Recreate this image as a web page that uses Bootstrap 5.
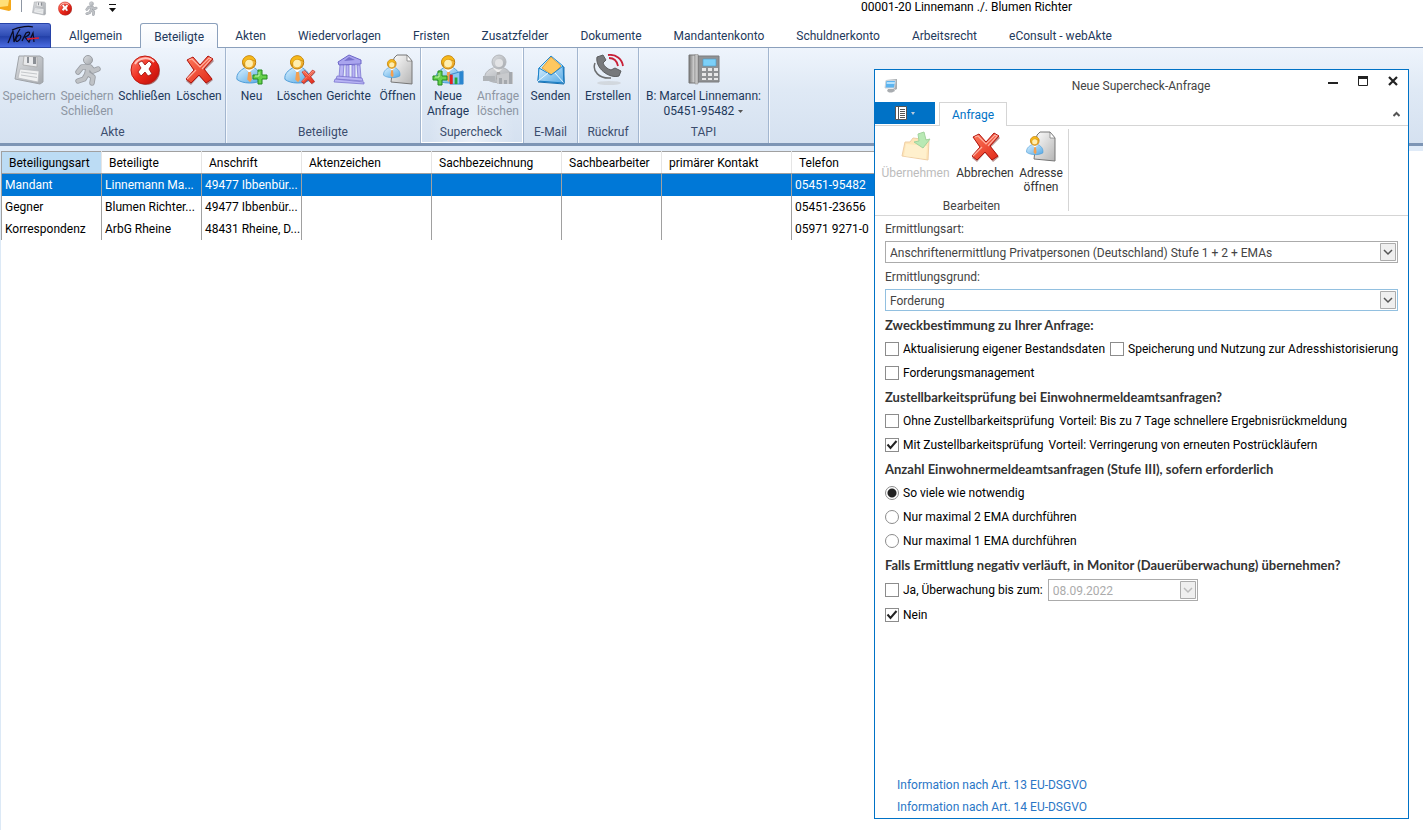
<!DOCTYPE html>
<html lang="de">
<head>
<meta charset="utf-8">
<meta name="viewport" content="width=device-width, initial-scale=1">
<title>00001-20 Linnemann ./. Blumen Richter</title>
<link href="https://cdn.jsdelivr.net/npm/bootstrap@5.3.0/dist/css/bootstrap.min.css" rel="stylesheet">
<style>
  body { font: 12px/16px Roboto, "Open Sans", sans-serif; color: #000; background: #fff; }
  button { font: inherit; color: inherit; background: none; border: 0; padding: 0; }
  svg { display: block; flex: none; }

  /* Main window */
  .titlebar { height: 24px; }
  .quick { gap: 10px; height: 17px; }
  .quick-orange { margin-right: -1px; }
  .quick-line { width: 1px; height: 12px; margin-right: -1px; background: #8d96a3; }
  .window-title { margin-left: 393px; line-height: 15px; }
  .main-tabs { height: 25px; margin-top: -1px; border-bottom: 1px solid #8ba0bc; }
  .app-btn { width: 51px; height: 25px; margin-right: 2px; border: 1px solid #2743a8; border-left: 0; border-radius: 0 3px 0 0;
    background: linear-gradient(#5a75d8, #2f4db4 50%, #2340a8 55%, #4a6be0); }
  .main-tabs .nav-link { padding: 0 16px; line-height: 27px; color: #1e395b; white-space: nowrap; }
  .main-tabs .nav-link.active { height: 26px; margin: 0 1px 0 2px; padding: 0 13px; background: linear-gradient(#fff, #f0f5fc);
    border: 1px solid #8ba0bc; border-bottom: 0; border-radius: 3px 3px 0 0; line-height: 26px; }
  .ribbon { height: 95px; background: linear-gradient(#eef4fc, #dfe9f5 45%, #d5e1f0); color: #1e395b; }
  .grp { display: grid; grid-template-rows: 76px 17px; border-right: 1px solid #a3b6cf; box-shadow: 1px 0 #f4f8fd; text-align: center; padding-top: 1px; }
  .grp-akte { grid-template-columns: 58px 58px 57px 52px; }
  .grp-bet { grid-template-columns: 51px 45px 53px 45px; }
  .grp-super { grid-template-columns: 54px 46px; padding-right: 2px; background: radial-gradient(ellipse at 50% 100%, #fff8, #fff0 60%); box-shadow: inset -1px -1px #fff, inset 1px 0 #fff; }
  .grp-mail { grid-template-columns: 53px; }
  .grp-call { grid-template-columns: 60px; }
  .grp-tapi { grid-template-columns: 129px; }
  .grp-name { grid-column: 1 / -1; color: #3b4d6e; line-height: 14px; }
  .tool { display: flex; flex-direction: column; align-items: center; line-height: 15px; padding-top: 5px; white-space: nowrap; }
  .tool svg { margin-bottom: 3px; }
  .tool:disabled { color: #8d96a3; }
  .tool .menu-caret { margin-bottom: 0; }
  .ribbon-edge { height: 8px; border-top: 3px solid #7d95b5; background: #e0ebf8; }
  .client { border-left: 1px solid #dce9f6; }

  /* Table of parties */
  .parties { width: 884px; table-layout: fixed; border-top: 1px solid #a0a0a0; border-left: 1px solid #a0a0a0; }
  .parties th { font-weight: 400; height: 22px; padding: 0 7px; border-bottom: 1px solid #a0a0a0; border-right: 1px solid #e5e5e5; white-space: nowrap; }
  .parties th:first-child { background: #bcdcf4; }
  .parties td { height: 22px; padding: 0 0 0 3px; border-right: 1px solid #a0a0a0; white-space: nowrap; }
  .parties .picked { background: #0078d7; color: #fff; }

  /* Floating dialog window */
  .dlg { position: absolute; top: 69px; right: 14px; bottom: 11px; width: 535px; background: #fff; border: 1px solid #0072c6; color: #444; }
  .dlg-title { height: 32px; padding-left: 8px; }
  .dlg-title h1 { font-size: 12px; font-weight: 400; line-height: 16px; margin: 0; }
  .win-btns { gap: 18px; padding: 5px 9px 0 0; margin-left: -56px; }
  .dlg-tabs { height: 24px; border-bottom: 1px solid #d5d5d5; }
  .file-btn { width: 60px; height: 22px; background: #0072c6; }
  .dlg-tabs .nav-link { width: 68px; height: 24px; margin-left: 4px; padding: 0; border: 1px solid #d5d5d5; border-bottom: 0; background: #fff;
    color: #0072c6; text-align: center; line-height: 24px; }
  .dlg-ribbon { height: 90px; padding: 3px 0 4px; border-bottom: 1px solid #d5d5d5; }
  .dlg-grp { display: grid; grid-template-columns: 81px 58px 54px; grid-template-rows: 70px 14px; border-right: 1px solid #d5d5d5; text-align: center; color: #333; }
  .dlg-grp .grp-name { color: #444; }
  .dlg-grp .tool { line-height: 14px; padding-top: 2px; }
  .dlg-grp .tool:disabled { color: #bcbcbc; }
  .dlg-grp .tool:disabled svg { opacity: .5; }
  .dlg-form { padding: 1px 10px 0; }
  .line-row { min-height: 24px; display: flex; align-items: center; gap: 4px; color: #000; white-space: nowrap; }
  .line-row.with-date { min-height: 26px; }
  .line-row label { margin-right: 1px; }
  .field-label { display: block; line-height: 24px; }
  .topic { font: 700 13px/24px Lato, "Open Sans", sans-serif; color: #333; margin: 0; white-space: nowrap; }
  .pick { appearance: none; display: block; width: 100%; height: 22px; margin-bottom: 2px; padding: 1px 22px 0 4px; font: inherit; color: #444; border: 1px solid #ababab; border-radius: 0;
    background: #fff url("data:image/svg+xml,%3Csvg xmlns='http://www.w3.org/2000/svg' width='16' height='18'%3E%3Cpath d='M.5.5h15v17H.5z' fill='%23efefef' stroke='%23ababab'/%3E%3Cpath d='M4 7l4 4 4-4' fill='none' stroke='%23555' stroke-width='1.5'/%3E%3C/svg%3E") no-repeat right 1px center; }
  .pick.lit { border-color: #92c0e0; }
  .pick:disabled { width: 150px; color: #ababab; opacity: 1; margin: 0;
    background-image: url("data:image/svg+xml,%3Csvg xmlns='http://www.w3.org/2000/svg' width='16' height='18'%3E%3Cpath d='M.5.5h15v17H.5z' fill='%23efefef' stroke='%23ababab'/%3E%3Cpath d='M4 7l4 4 4-4' fill='none' stroke='%23bbb' stroke-width='1.5'/%3E%3C/svg%3E"); }
  .tick { appearance: none; flex: none; width: 14px; height: 14px; margin: 0; border: 1px solid #8c8c8c; background: #fff; }
  .tick[type=radio] { border-radius: 50%; }
  .tick[type=checkbox]:checked { background-image: url("data:image/svg+xml,%3Csvg xmlns='http://www.w3.org/2000/svg' width='12' height='12'%3E%3Cpath d='M1.5 5.5L4.5 9 10.5 2' fill='none' stroke='%23222' stroke-width='2'/%3E%3C/svg%3E"); }
  .tick[type=radio]:checked { background: radial-gradient(circle, #222 4px, #fff 5px); }
  .dlg-links { padding: 0 22px; line-height: 22px; }
  .dlg-links a { color: #2a76c6; text-decoration: none; }
</style>
</head>
<body class="vh-100 d-flex flex-column overflow-hidden position-relative">

<svg width="0" height="0" class="position-absolute" aria-hidden="true">
  <defs>
    <linearGradient id="gGold" x1="0" y1="0" x2="1" y2="1"><stop offset="0" stop-color="#ffe680"/><stop offset="1" stop-color="#e89a10"/></linearGradient>
    <linearGradient id="gBlue" x1="0" y1="0" x2="1" y2="1"><stop offset="0" stop-color="#d8f0ff"/><stop offset="1" stop-color="#55a8e4"/></linearGradient>
    <linearGradient id="gGrey" x1="0" y1="0" x2="1" y2="1"><stop offset="0" stop-color="#dcdee1"/><stop offset="1" stop-color="#a4a8ad"/></linearGradient>
    <linearGradient id="gRed" x1="0" y1="0" x2="1" y2="1"><stop offset="0" stop-color="#ff8a78"/><stop offset=".5" stop-color="#ee2a1c"/><stop offset="1" stop-color="#b80c08"/></linearGradient>
    <linearGradient id="gCross" x1="0" y1="0" x2="1" y2="1"><stop offset="0" stop-color="#ff7a5c"/><stop offset="1" stop-color="#e02818"/></linearGradient>
    <linearGradient id="gPage" x1="0" y1="0" x2="1" y2="1"><stop offset="0" stop-color="#fff"/><stop offset="1" stop-color="#b4b4b4"/></linearGradient>
    <linearGradient id="gPhone" x1="0" y1="0" x2="1" y2="0"><stop offset="0" stop-color="#777"/><stop offset=".5" stop-color="#c9c9c9"/><stop offset="1" stop-color="#6e6e6e"/></linearGradient>
    <symbol id="save" viewBox="0 0 32 32">
      <path d="M6 2h21l3 2v24l-3 2L2 25z" fill="url(#gGrey)" stroke="#9fa3a8"/>
      <path d="M11 2l-1 9 14 2V3z" fill="#e9eaec" stroke="#aaa" stroke-width=".8"/><path d="M20 3h3v7h-3zM14 3h2v6h-2z" fill="#8b8f95"/>
      <path d="M7 15l19 2-1 11L5 24z" fill="#f0f1f2" stroke="#b3b6ba" stroke-width=".7"/><path d="M8 18l16 2M8 21l16 2.500" stroke="#c4c7ca"/>
    </symbol>
    <symbol id="runner" viewBox="0 0 32 32">
      <g fill="none" stroke="#9a9ea4" stroke-width="5.500" stroke-linejoin="round" stroke-linecap="round"><path d="M17 13l-1 7-3 5-6 2M16 19l6 4-1 6M7 18l4-5 8 0 3 4 5-2"/></g>
      <g fill="none" stroke="#bfc2c6" stroke-width="3.800" stroke-linejoin="round" stroke-linecap="round"><path d="M17 13l-1 7-3 5-6 2M16 19l6 4-1 6M7 18l4-5 8 0 3 4 5-2"/></g>
      <circle cx="17" cy="6" r="4.500" fill="url(#gGrey)" stroke="#9a9ea4"/>
    </symbol>
    <symbol id="closeball" viewBox="0 0 32 32">
      <circle cx="17" cy="17" r="14" fill="#7d1a14" opacity=".6"/><circle cx="16" cy="16" r="14" fill="url(#gRed)" stroke="#c01810"/>
      <path d="M6 10a11 9 0 0 1 19-2" stroke="#ffc4bc" stroke-width="2" fill="none"/>
      <path d="M9 9l4-2 3 4 4-4 3 3-3 5 3 5-4 2-3-4-4 4-3-4 3-4z" fill="#fff" stroke="#9b100c" stroke-width=".8"/>
    </symbol>
    <symbol id="cross" viewBox="0 0 32 32">
      <path d="M5 7l6-2 7 7 9-9 4 4-9 9 8 10-6 5-8-9-8 9-5-4 8-10z" fill="#7b2a24" opacity=".5"/>
      <path d="M4 6l6-3 7 8 8-9 5 3-9 10 8 10-6 4-7-8-8 8-5-4 8-9z" fill="url(#gCross)" stroke="#b0140e"/>
      <path d="M6 6l3-1 8 8 9-9 2 1-9 10M4 25l9-9" stroke="#ffb0a0" stroke-width="1.200" fill="none"/>
    </symbol>
    <symbol id="person" viewBox="0 0 32 32">
      <path d="M1 26c-1-6 4-10 8-12h11c5 3 8 7 7 13-6 4-20 4-26-1z" fill="url(#gBlue)" stroke="#4a9ad6"/>
      <path d="M9 14l5 5 6-5-3-2h-5z" fill="#fff" stroke="#8ab8dc" stroke-width=".5"/><path d="M13 18h3l1 8-2 3-3-3z" fill="#f4a050"/>
      <circle cx="14" cy="8" r="7" fill="url(#gGold)" stroke="#b87808"/><path d="M7 8c0-9 13-10 14-1-3-2-9-3-11 0-1 1-1 3-1 5z" fill="#f5b81c" stroke="#b87808" stroke-width=".6"/><circle cx="14" cy="9" r="4" fill="#ffeeb0"/>
    </symbol>
    <symbol id="persongrey" viewBox="0 0 32 32">
      <path d="M3 24c-1-6 5-9 8-10h11c5 2 8 6 7 12-6 4-20 4-26-2z" fill="url(#gGrey)" stroke="#b0b3b7"/>
      <path d="M11 14l5 5 5-5z" fill="#eee"/><path d="M15 18h3l1 7-2 3-3-3z" fill="#aaa"/>
      <circle cx="17" cy="8" r="7" fill="url(#gGrey)" stroke="#b4b7bb"/><circle cx="17" cy="9" r="4" fill="#e2e3e5"/>
      <path d="M1 22h12v5H1z" fill="#b0b4b8"/><path d="M15 30V21l16-3v12z" fill="#c8cacd"/><path d="M17 30v-6h3v6zM22 30v-4h3v4zM27 30V18h3v12z" fill="#a4a8ad"/>
    </symbol>
    <symbol id="plus" viewBox="0 0 16 16"><path d="M6 1h4v5h5v4h-5v5H6v-5H1V6h5z" fill="#66d04c" stroke="#238a1c"/><path d="M7 3v4H3" stroke="#c6f5b4" fill="none"/></symbol>
    <symbol id="court" viewBox="0 0 32 32">
      <path d="M5 8L16 1l12 5v4L6 11z" fill="#a9a4ee" stroke="#6c66c8"/><path d="M11 7l5-4 6 3z" fill="#7670cc"/>
      <g fill="#b8b4f4" stroke="#726ccc" stroke-width=".7"><path d="M7 11h4l-1 12H6zM13 11h3v13h-3zM19 11h3v13h-3zM24 11h3l1 13h-3z"/><path d="M4 22l25 2 1 3-27-2z"/><path d="M2 25l29 3v2L1 28z"/></g>
    </symbol>
    <symbol id="pageperson" viewBox="0 0 32 32">
      <path d="M12 4l3-3h10l5 6v23L9 28z" fill="url(#gPage)" stroke="#777"/><path d="M25 1v6h5z" fill="#fff" stroke="#777" stroke-width=".7"/>
      <use href="#person" x="1" y="5" width="20" height="20"/>
    </symbol>
    <symbol id="bars" viewBox="0 0 16 16"><path d="M1 15V5l14-4v14z" fill="#8cc8f0" stroke="#3a88c8"/><path d="M1 15V5h3v10z" fill="#e02020"/><path d="M6 15V8h3v7z" fill="#28a838"/><path d="M11 15V2h4v13z" fill="#2a86d0"/></symbol>
    <symbol id="mail" viewBox="0 0 32 32">
      <path d="M4 14L16 2l12 10 1 17-26-2z" fill="#c2ebff" stroke="#2288cc"/><path d="M7 14L16 3l10 9-9 9z" fill="#ffc860" stroke="#d8942c" stroke-width=".8"/>
      <path d="M4 14l12 7 12-9 1 17-26-2z" fill="url(#gBlue)" stroke="#1a80c8"/><path d="M3 27l10-8M29 29l-9-10" stroke="#eaf8ff"/><path d="M3 28l26 2V13" fill="none" stroke="#1a70b0"/>
    </symbol>
    <symbol id="dial" viewBox="0 0 32 32">
      <path d="M3 9C0 17 7 25 19 24" fill="none" stroke="#6c6e70" stroke-width="1.500"/>
      <path d="M5 3l6-2 3 5-3 3c1 3 4 6 8 7l4-2 6 3-2 5C17 25 3 14 5 3z" fill="#77797c" stroke="#5c5e60"/>
      <path d="M17 4c5 0 8 3 9 8M16 1c8-1 14 4 15 11" fill="none" stroke="#c82038" stroke-width="1.800"/><ellipse cx="17" cy="29" rx="12" ry="2" fill="#bbb" opacity=".4"/>
    </symbol>
    <symbol id="desk" viewBox="0 0 32 32">
      <path d="M10 2h21v26H10z" fill="#909294" stroke="#7a7c7e"/><path d="M1 1h9v28H1z" fill="url(#gPhone)" stroke="#777"/><path d="M7 0h3v30H7z" fill="#c4c4c4" stroke="#888" stroke-width=".5"/>
      <path d="M15 5h13v7H15z" fill="#7cd0f8" stroke="#4c9cc8" stroke-width=".6"/><g fill="#e8e8e8"><path d="M14 14h4v3h-4zM20 14h4v3h-4zM26 14h4v3h-4zM14 19h4v3h-4zM20 19h4v3h-4zM26 19h4v3h-4zM14 24h4v2h-4zM20 24h4v2h-4zM26 24h4v2h-4z"/></g>
    </symbol>
    <symbol id="accept" viewBox="0 0 32 32">
      <path d="M5 11l5 0 3-4 16 2-1 20-26-4z" fill="#ffcf74" stroke="#e0a050"/><path d="M6 13l21 2-1 13-22-3z" fill="#ffe39c"/><path d="M18 3l6-2 2 8 4-1-7 9-9-6 5-1z" fill="#74d46c" stroke="#46a83e"/>
    </symbol>
    <symbol id="monitor" viewBox="0 0 16 16"><path d="M3 2l11-1v10l-2 1z" fill="#a8acb0"/><path d="M3 2.500h9.500l-1 7.500H2z" fill="#5cb4f0" stroke="#cfd3d8"/><path d="M4 4h8l-.3 2H3.600z" fill="#b4e2ff"/><path d="M5 11h6l1 2-3 1.500H6L4 13z" fill="#a8acb0"/></symbol>
  </defs>
</svg>

<header class="titlebar d-flex">
  <div class="quick d-flex align-items-center">
    <svg class="quick-orange align-self-start" width="12" height="12"><path d="M0 0h11v10l-2 1L0 9z" fill="#f5a818"/><path d="M0 0h9l-1 6-8 1z" fill="#ffdf78"/></svg>
    <span class="quick-line align-self-start ms-n1"></span>
    <button type="button" aria-label="Speichern" disabled><svg width="16" height="15"><use href="#save"/></svg></button>
    <button type="button" aria-label="Schließen"><svg width="16" height="15"><use href="#closeball"/></svg></button>
    <button type="button" aria-label="Speichern und schließen" disabled><svg width="16" height="15"><use href="#runner"/></svg></button>
    <button type="button" aria-label="Symbolleiste anpassen"><svg width="8" height="12"><path d="M0 1h7v1H0zM0 5h7L3.500 9z" fill="#111"/></svg></button>
  </div>
  <div class="window-title flex-grow-1 text-center">00001-20 Linnemann ./. Blumen Richter</div>
</header>

<nav class="main-tabs nav flex-nowrap">
  <button type="button" class="app-btn" aria-label="NoRA"><svg width="50" height="23" fill="none" stroke="#0a0a20" stroke-width="1.200"><path d="M8 19c2-4 3-8 5-12l1 11c2-5 3-9 6-13M19 11c-4 2-4 8-1 6s4-6 1-6M22 17l4-8c5-3 5 2-1 4l4 5 4-9 1 9M29 15l6-1M12 6c8-4 18-4 21-3"/><path d="M27 15l12-1" stroke="#e02030" stroke-width="1.500"/></svg></button>
  <a class="nav-link" href="#">Allgemein</a>
  <a class="nav-link active" href="#">Beteiligte</a>
  <a class="nav-link" href="#">Akten</a>
  <a class="nav-link" href="#">Wiedervorlagen</a>
  <a class="nav-link" href="#">Fristen</a>
  <a class="nav-link" href="#">Zusatzfelder</a>
  <a class="nav-link" href="#">Dokumente</a>
  <a class="nav-link" href="#">Mandantenkonto</a>
  <a class="nav-link" href="#">Schuldnerkonto</a>
  <a class="nav-link" href="#">Arbeitsrecht</a>
  <a class="nav-link" href="#">eConsult - webAkte</a>
</nav>

<section class="ribbon d-flex">
  <div class="grp grp-akte">
    <button type="button" class="tool" disabled><svg width="32" height="32"><use href="#save"/></svg>Speichern</button>
    <button type="button" class="tool" disabled><svg width="32" height="32"><use href="#runner"/></svg>Speichern<br>Schließen</button>
    <button type="button" class="tool"><svg width="32" height="32"><use href="#closeball"/></svg>Schließen</button>
    <button type="button" class="tool"><svg width="32" height="32"><use href="#cross"/></svg>Löschen</button>
    <div class="grp-name">Akte</div>
  </div>
  <div class="grp grp-bet">
    <button type="button" class="tool"><svg width="32" height="32"><use href="#person" y="1" width="30" height="30"/><use href="#plus" x="16" y="15" width="16" height="16"/></svg>Neu</button>
    <button type="button" class="tool"><svg width="32" height="32"><use href="#person" y="1" width="30" height="30"/><use href="#cross" x="16" y="15" width="16" height="16"/></svg>Löschen</button>
    <button type="button" class="tool"><svg width="32" height="32"><use href="#court"/></svg>Gerichte</button>
    <button type="button" class="tool"><svg width="32" height="32"><use href="#pageperson"/></svg>Öffnen</button>
    <div class="grp-name">Beteiligte</div>
  </div>
  <div class="grp grp-super">
    <button type="button" class="tool"><svg width="32" height="32"><use href="#person" x="3" y="1" width="30" height="30"/><use href="#bars" x="17" y="16" width="15" height="15"/><use href="#plus" x="0" y="16" width="16" height="16"/></svg>Neue<br>Anfrage</button>
    <button type="button" class="tool" disabled><svg width="32" height="32"><use href="#persongrey"/></svg>Anfrage<br>löschen</button>
    <div class="grp-name">Supercheck</div>
  </div>
  <div class="grp grp-mail">
    <button type="button" class="tool"><svg width="32" height="32"><use href="#mail"/></svg>Senden</button>
    <div class="grp-name">E-Mail</div>
  </div>
  <div class="grp grp-call">
    <button type="button" class="tool"><svg width="32" height="32"><use href="#dial"/></svg>Erstellen</button>
    <div class="grp-name">Rückruf</div>
  </div>
  <div class="grp grp-tapi">
    <button type="button" class="tool"><svg width="32" height="32"><use href="#desk"/></svg>B: Marcel Linnemann:<span class="d-flex align-items-center gap-1">05451-95482 <svg class="menu-caret" width="5" height="3"><path d="M0 0h5L2.500 3z" fill="#555"/></svg></span></button>
    <div class="grp-name">TAPI</div>
  </div>
</section>
<div class="ribbon-edge"></div>

<main class="client flex-grow-1">
  <table class="parties">
    <colgroup><col style="width:100px"><col style="width:100px"><col style="width:100px"><col style="width:130px"><col style="width:130px"><col style="width:100px"><col style="width:130px"><col></colgroup>
    <thead><tr><th>Beteiligungsart</th><th>Beteiligte</th><th>Anschrift</th><th>Aktenzeichen</th><th>Sachbezeichnung</th><th>Sachbearbeiter</th><th>primärer Kontakt</th><th>Telefon</th></tr></thead>
    <tbody>
      <tr class="picked"><td>Mandant</td><td>Linnemann Ma...</td><td>49477 Ibbenbür...</td><td></td><td></td><td></td><td></td><td>05451-95482</td></tr>
      <tr><td>Gegner</td><td>Blumen Richter...</td><td>49477 Ibbenbür...</td><td></td><td></td><td></td><td></td><td>05451-23656</td></tr>
      <tr><td>Korrespondenz</td><td>ArbG Rheine</td><td>48431 Rheine, D...</td><td></td><td></td><td></td><td></td><td>05971 9271-0</td></tr>
    </tbody>
  </table>
</main>

<section class="dlg d-flex flex-column" role="dialog" aria-labelledby="dlgTitle">
  <div class="dlg-title d-flex align-items-center">
    <svg width="16" height="16"><use href="#monitor"/></svg>
    <h1 id="dlgTitle" class="flex-grow-1 text-center">Neue Supercheck-Anfrage</h1>
    <div class="win-btns d-flex align-self-start align-items-start">
      <button type="button" aria-label="Minimieren"><svg width="12" height="12"><path d="M1 7h10v2H1z" fill="#222"/></svg></button>
      <button type="button" aria-label="Maximieren"><svg width="12" height="12"><path d="M1.500 1.500h9v9h-9z" fill="none" stroke="#222"/><path d="M1 1h10v3H1z" fill="#222"/></svg></button>
      <button type="button" aria-label="Fenster schließen"><svg width="12" height="12"><path d="M2 2l8 8M10 2l-8 8" stroke="#222" stroke-width="2.200"/></svg></button>
    </div>
  </div>
  <div class="dlg-tabs nav flex-nowrap">
    <button type="button" class="file-btn d-flex align-items-center justify-content-center gap-1" aria-label="Datei"><svg width="12" height="14"><path d="M.5.500h11v13H.500z" fill="#fff" stroke="#555"/><path d="M3.500 0v14M5 3.500h5M5 5.500h5M5 7.500h5M5 9.500h5M5 11.500h5" stroke="#555"/></svg><svg width="4" height="3"><path d="M0 0h4L2 3z" fill="#bcd"/></svg></button>
    <a class="nav-link" href="#">Anfrage</a>
    <button type="button" class="ms-auto me-2" aria-label="Menüband minimieren"><svg width="7" height="6"><path d="M.5 5l3-3 3 3" fill="none" stroke="#555" stroke-width="2"/></svg></button>
  </div>
  <div class="dlg-ribbon d-flex">
    <div class="dlg-grp">
      <button type="button" class="tool" disabled><svg width="32" height="32"><use href="#accept"/></svg>Übernehmen</button>
      <button type="button" class="tool"><svg width="32" height="32"><use href="#cross"/></svg>Abbrechen</button>
      <button type="button" class="tool"><svg width="32" height="32"><use href="#pageperson"/></svg>Adresse<br>öffnen</button>
      <div class="grp-name">Bearbeiten</div>
    </div>
  </div>
  <form class="dlg-form flex-grow-1">
    <label class="field-label" for="art">Ermittlungsart:</label>
    <select class="pick" id="art"><option>Anschriftenermittlung Privatpersonen (Deutschland) Stufe 1 + 2 + EMAs</option></select>
    <label class="field-label" for="grund">Ermittlungsgrund:</label>
    <select class="pick lit" id="grund"><option>Forderung</option></select>
    <h2 class="topic">Zweckbestimmung zu Ihrer Anfrage:</h2>
    <div class="line-row"><input class="tick" type="checkbox" id="c1"><label for="c1">Aktualisierung eigener Bestandsdaten</label><input class="tick" type="checkbox" id="c2"><label for="c2">Speicherung und Nutzung zur Adresshistorisierung</label></div>
    <div class="line-row"><input class="tick" type="checkbox" id="c3"><label for="c3">Forderungsmanagement</label></div>
    <h2 class="topic">Zustellbarkeitsprüfung bei Einwohnermeldeamtsanfragen?</h2>
    <div class="line-row"><input class="tick" type="checkbox" id="c4"><label for="c4">Ohne Zustellbarkeitsprüfung</label><span>Vorteil: Bis zu 7 Tage schnellere Ergebnisrückmeldung</span></div>
    <div class="line-row"><input class="tick" type="checkbox" id="c5" checked><label for="c5">Mit Zustellbarkeitsprüfung</label><span>Vorteil: Verringerung von erneuten Postrückläufern</span></div>
    <h2 class="topic">Anzahl Einwohnermeldeamtsanfragen (Stufe III), sofern erforderlich</h2>
    <div class="line-row"><input class="tick" type="radio" name="ema" id="r1" checked><label for="r1">So viele wie notwendig</label></div>
    <div class="line-row"><input class="tick" type="radio" name="ema" id="r2"><label for="r2">Nur maximal 2 EMA durchführen</label></div>
    <div class="line-row"><input class="tick" type="radio" name="ema" id="r3"><label for="r3">Nur maximal 1 EMA durchführen</label></div>
    <h2 class="topic">Falls Ermittlung negativ verläuft, in Monitor (Dauerüberwachung) übernehmen?</h2>
    <div class="line-row with-date"><input class="tick" type="checkbox" id="c6"><label for="c6">Ja, Überwachung bis zum:</label><select class="pick" aria-label="Überwachung bis zum" disabled><option>08.09.2022</option></select></div>
    <div class="line-row"><input class="tick" type="checkbox" id="c7" checked><label for="c7">Nein</label></div>
  </form>
  <div class="dlg-links d-flex flex-column align-items-start">
    <a href="#">Information nach Art. 13 EU-DSGVO</a>
    <a href="#">Information nach Art. 14 EU-DSGVO</a>
  </div>
</section>

<script src="https://cdn.jsdelivr.net/npm/bootstrap@5.3.0/dist/js/bootstrap.bundle.min.js"></script>
</body>
</html>
